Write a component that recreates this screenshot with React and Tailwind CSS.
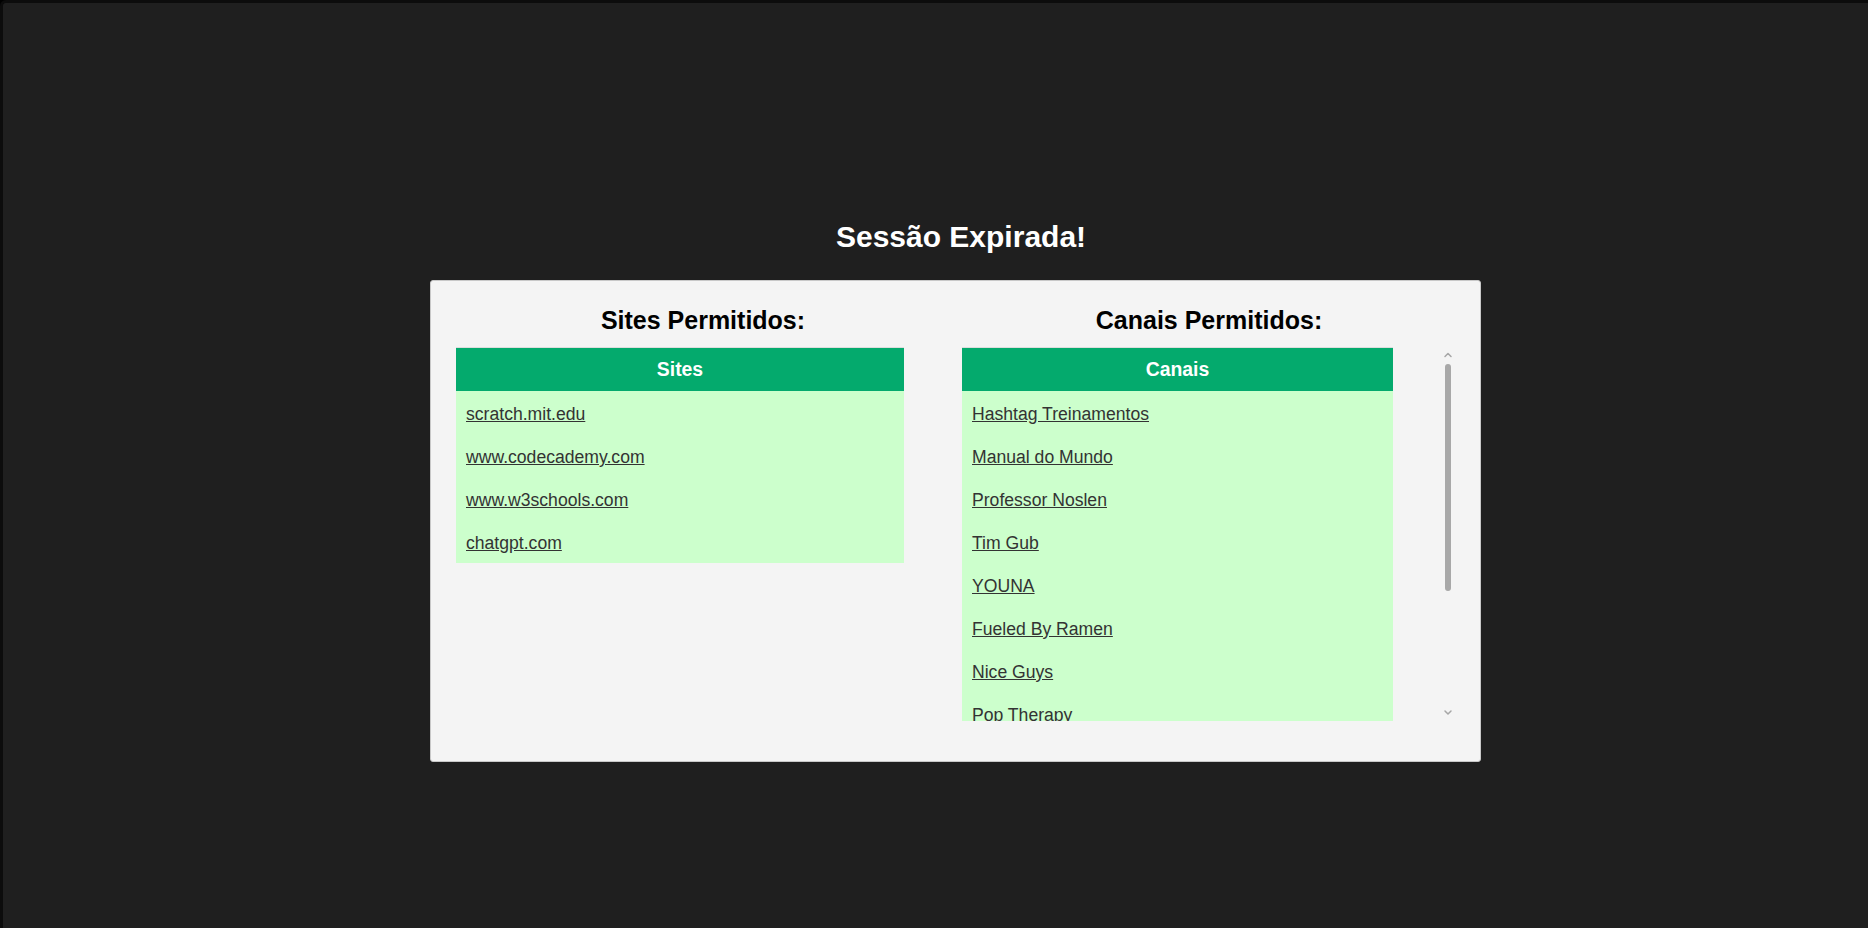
import React from 'react';

const sites = ['scratch.mit.edu', 'www.codecademy.com', 'www.w3schools.com', 'chatgpt.com'];

const canais = [
  'Hashtag Treinamentos',
  'Manual do Mundo',
  'Professor Noslen',
  'Tim Gub',
  'YOUNA',
  'Fueled By Ramen',
  'Nice Guys',
  'Pop Therapy',
  'Ciência Todo Dia',
  'Nerdologia',
  'Kurzgesagt',
  'Khan Academy',
];

function Chevron({ down }) {
  return (
    <svg width="16" height="16" viewBox="0 0 16 16" className="block">
      <path
        d={down ? 'M5 7l3 3 3-3' : 'M5 9.5l3-3 3 3'}
        stroke="#a6a6a6"
        strokeWidth="1.5"
        fill="none"
        strokeLinecap="round"
        strokeLinejoin="round"
      />
    </svg>
  );
}

// thin scrollbar look beside the list
function ScrollRail() {
  return (
    <div className="w-[16px] h-[374px] flex flex-col items-center shrink-0">
      <Chevron />
      <div className="mt-[1px] w-[6px] h-[227px] rounded-full bg-[#a8a8a8]" />
      <div className="flex-1" />
      <div className="mb-[1px]">
        <Chevron down />
      </div>
    </div>
  );
}

function ListTable({ title, items, width }) {
  return (
    <table className={`${width} border-collapse`}>
      <thead>
        <tr>
          <th className="h-[44px] p-0 pt-[1px] bg-[#04aa6d] text-white text-[19.4px] font-bold leading-[21px] text-center shadow-[inset_0_1px_0_#dddddd]">
            {title}
          </th>
        </tr>
      </thead>
      <tbody>
        {items.map((item) => (
          <tr key={item} className="bg-[#ccffcc]">
            <td className="h-[43px] text-left text-[17.6px] leading-[21px] pt-[4px] pb-0 px-[10px]">
              <a href="#" className="text-[#333333] underline">
                {item}
              </a>
            </td>
          </tr>
        ))}
      </tbody>
    </table>
  );
}

export default function App() {
  return (
    <div className="bg-black">
      <div className="h-[928px] bg-[#1f1f1f] border-t-[3px] border-l-[3px] border-[#0c0c0c] rounded-tl-[6px] font-['Liberation_Sans',Arial,sans-serif] pt-[216px] pl-[427px]">
        <h1 className="w-[1051px] pl-[11px] text-center text-white font-bold text-[30px] leading-[36px] mb-[25px]">
          Sessão Expirada!
        </h1>

        <div className="w-[1051px] bg-[#f4f4f4] border border-[#c8c8c8] rounded-[3px] pt-[24px] pb-[40px] pl-[25px] pr-[24px] flex gap-[12px]">
          <div className="w-[494px]">
            <h2 className="text-center text-black font-bold text-[25px] leading-[30px] mb-[12px]">
              Sites Permitidos:
            </h2>
            <ListTable title="Sites" items={sites} width="w-[448px]" />
          </div>

          <div className="w-[494px]">
            <h2 className="text-center text-black font-bold text-[25px] leading-[30px] mb-[12px]">
              Canais Permitidos:
            </h2>
            <div className="flex">
              <div className="w-[478px] h-[374px] overflow-y-auto [scrollbar-width:none]">
                <ListTable title="Canais" items={canais} width="w-[431px]" />
              </div>
              <ScrollRail />
            </div>
          </div>
        </div>
      </div>
    </div>
  );
}
